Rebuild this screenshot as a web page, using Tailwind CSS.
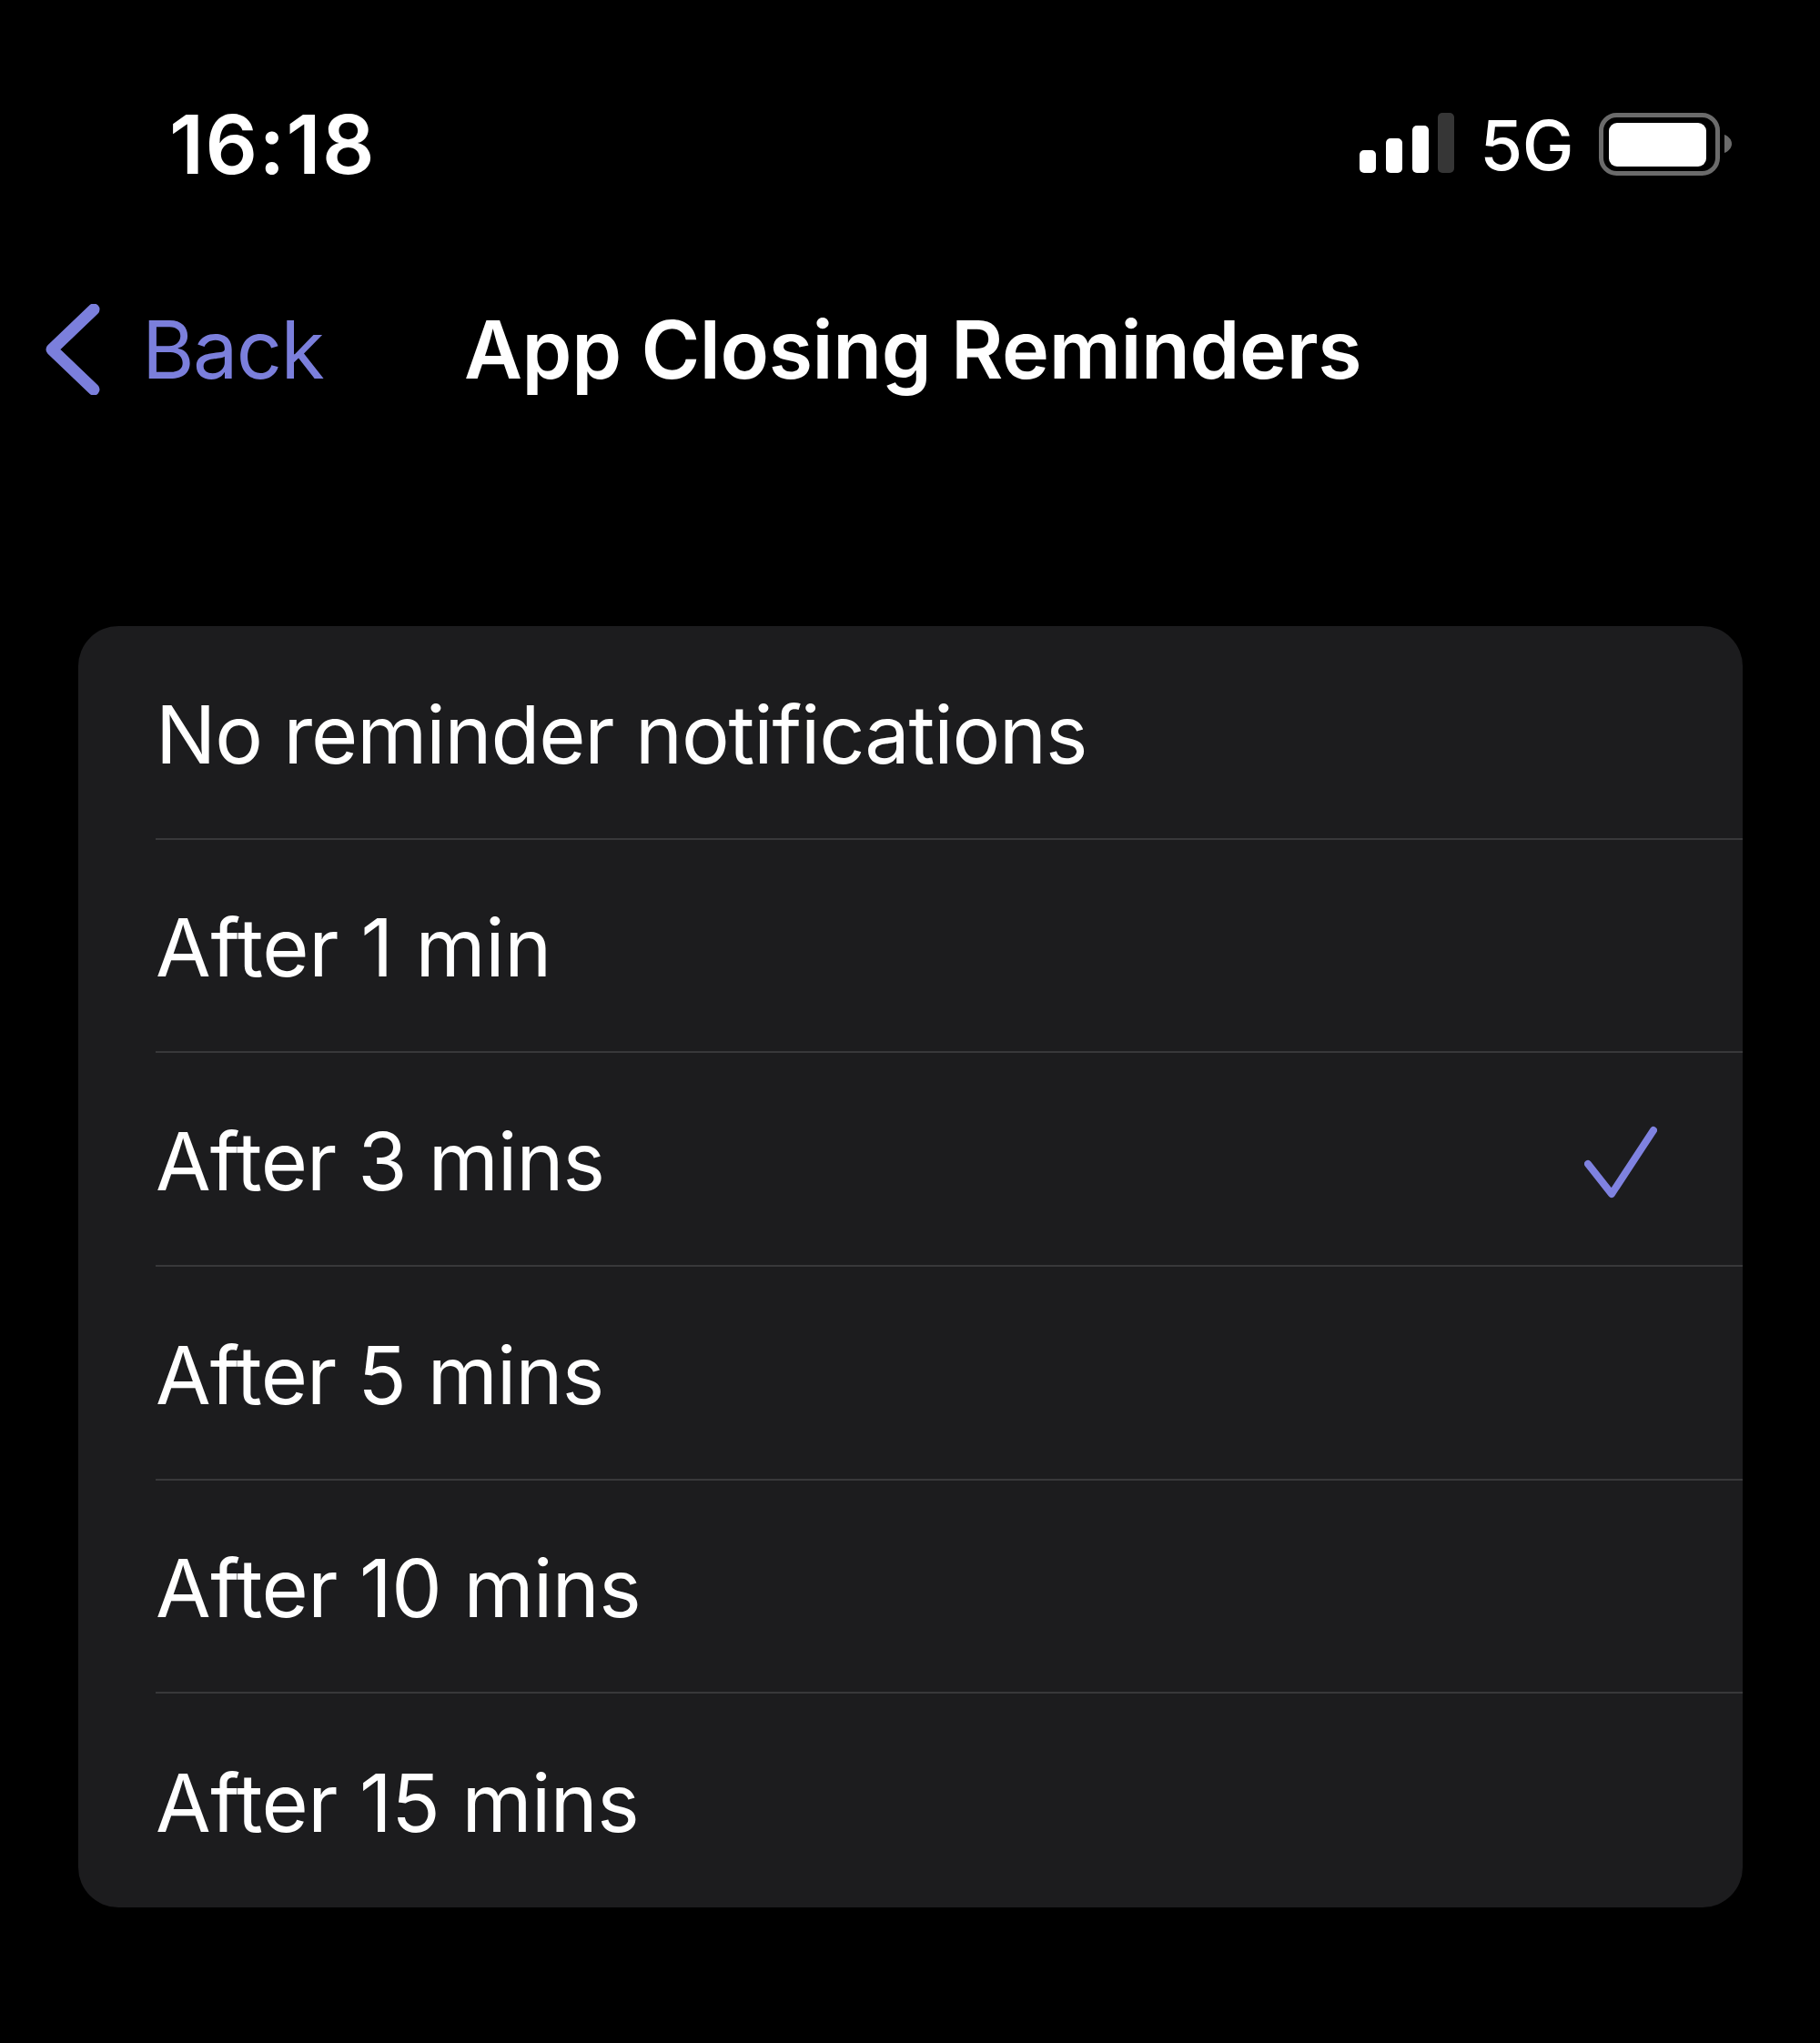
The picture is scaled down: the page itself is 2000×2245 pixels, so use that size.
<!doctype html>
<html>
<head>
<meta charset="utf-8">
<script src="https://cdn.jsdelivr.net/npm/@tailwindcss/browser@4"></script>
</head>
<body class="bg-black">
<div class="w-[2000px] h-[2245px] bg-black text-white font-['Inter','Liberation_Sans',sans-serif] overflow-hidden">
  <div class="h-[324px] pt-[114px] pl-[186px] pr-[97px] flex items-start justify-between">
    <span class="text-[90px] leading-[90px] font-semibold tracking-[1.4px]">16:18</span>
    <div class="flex items-center gap-[28px] mt-[10px]">
      <svg width="104" height="70" viewBox="0 0 104 70" class="block">
        <rect x="0" y="41" width="18" height="25" rx="5" fill="#fff"/>
        <rect x="29" y="28" width="18" height="38" rx="5" fill="#fff"/>
        <rect x="58" y="14" width="18" height="52" rx="5" fill="#fff"/>
        <rect x="86" y="0" width="18" height="66" rx="5" fill="#363636"/>
      </svg>
      <span class="text-[76px] leading-[70px] font-medium tracking-[-0.5px]">5G</span>
      <svg width="146" height="70" viewBox="0 0 146 70" class="block">
        <rect x="2.5" y="2.5" width="128" height="64" rx="17" fill="none" stroke="#6b6b6b" stroke-width="5"/>
        <rect x="11" y="11" width="107" height="48" rx="9" fill="#fff"/>
        <path d="M138 24c5 2 8 6 8 10s-3 8-8 10z" fill="#6b6b6b"/>
      </svg>
    </div>
  </div>
  <div class="h-[120px] pl-[50px] grid grid-cols-[460px_auto] items-center">
    <div class="flex items-center gap-[44px] text-[#7b7fdc]">
      <svg width="62" height="100" viewBox="0 0 62 100" class="block">
        <path d="M53 6 L7 50 L53 94" fill="none" stroke="#7b7fdc" stroke-width="13" stroke-linecap="round" stroke-linejoin="round"/>
      </svg>
      <span class="text-[88px] leading-[100px] font-normal tracking-[-1.6px]">Back</span>
    </div>
    <span class="text-[88px] leading-[100px] font-semibold tracking-[-0.4px]">App Closing Reminders</span>
  </div>
  <div class="mt-[244px] ml-[86px] w-[1829px] bg-[#1c1c1e] rounded-[44px] pl-[85px] text-[88px]">
    <div class="h-[234.67px] flex items-center pt-[5px] border-b-2 border-[#38383a]"><span class="tracking-[-1.1px]">No reminder notifications</span></div>
    <div class="h-[234.67px] flex items-center pt-[5px] border-b-2 border-[#38383a]"><span class="tracking-[-0.3px]">After 1 min</span></div>
    <div class="h-[234.67px] flex items-center justify-between pt-[5px] border-b-2 border-[#38383a] pr-[94px]">
      <span class="tracking-[-0.85px]">After 3 mins</span>
      <svg width="80" height="84" viewBox="0 0 80 84" class="block">
        <path d="M4 45 L30 78 L76 8" fill="none" stroke="#7f82e0" stroke-width="8" stroke-linecap="round" stroke-linejoin="round"/>
      </svg>
    </div>
    <div class="h-[234.67px] flex items-center pt-[5px] border-b-2 border-[#38383a]"><span class="tracking-[-0.85px]">After 5 mins</span></div>
    <div class="h-[234.67px] flex items-center pt-[5px] border-b-2 border-[#38383a]"><span class="tracking-[-0.55px]">After 10 mins</span></div>
    <div class="h-[234.67px] flex items-center pt-[5px]"><span class="tracking-[-0.55px]">After 15 mins</span></div>
  </div>
</div>
</body>
</html>
